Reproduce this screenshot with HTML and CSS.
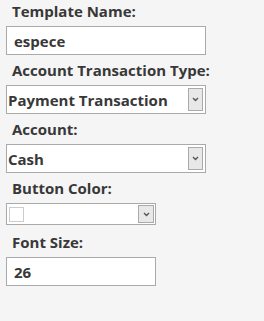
FILE: index.html
```html
<!DOCTYPE html>
<html lang="en">
<head>
    <meta charset="UTF-8">
    <meta name="viewport" content="width=device-width, initial-scale=1.0">
    <title>Template</title>
    <link rel="stylesheet" href="styles.css">
</head>
<body>

    <div class="form">
        <div class="field">
            <label>Template Name:</label>
            <div class="input wide">espece</div>
        </div>
        <div class="field">
            <label>Account Transaction Type:</label>
            <div class="select wide">
                <span class="value">Payment Transaction</span>
                <span class="arrow"><svg width="7" height="5" viewBox="0 0 7 5"><path d="M1 1 L3.5 3.5 L6 1" fill="none" stroke="#555" stroke-width="1.4"/></svg></span>
            </div>
        </div>
        <div class="field">
            <label>Account:</label>
            <div class="select wide">
                <span class="value">Cash</span>
                <span class="arrow"><svg width="7" height="5" viewBox="0 0 7 5"><path d="M1 1 L3.5 3.5 L6 1" fill="none" stroke="#555" stroke-width="1.4"/></svg></span>
            </div>
        </div>
        <div class="field color-field">
            <label>Button Color:</label>
            <div class="select narrow short">
                <span class="swatch"></span>
                <span class="arrow"><svg width="7" height="5" viewBox="0 0 7 5"><path d="M1 1 L3.5 3.5 L6 1" fill="none" stroke="#555" stroke-width="1.4"/></svg></span>
            </div>
        </div>
        <div class="field">
            <label>Font Size:</label>
            <div class="input narrow">26</div>
        </div>
    </div>

</body>
</html>
```

FILE: styles.css
```css
body {
    margin: 0;
    background-color: #f5f5f5;
    color: #383838;
    font-family: "Open Sans", Arial, sans-serif;
    font-weight: bold;
}
.form {
    padding: 1px 6px;
}
.field {
    margin-bottom: 5px;
}
.color-field {
    margin-bottom: 7px;
}
.field label {
    display: block;
    font-size: 15px;
    line-height: 20px;
    padding-left: 6px;
    margin-bottom: 5px;
}
.input, .select {
    box-sizing: border-box;
    background: #fff;
    border: 1px solid #aaa;
    font-size: 15px;
    height: 29px;
    display: flex;
    align-items: center;
}
.input {
    padding-left: 7px;
}
.select {
    padding: 0 2px 0 1px;
    justify-content: space-between;
}
.wide {
    width: 200px;
}
.narrow {
    width: 150px;
}
.short {
    height: 22px;
    padding: 0 1px 0 2px;
}
.arrow {
    box-sizing: border-box;
    width: 15px;
    height: 23px;
    background: #e8e8e8;
    border: 1px solid #aaa;
    display: flex;
    align-items: center;
    justify-content: center;
}
.short .arrow {
    height: 18px;
    width: 16px;
}
.swatch {
    width: 15px;
    height: 15px;
    box-sizing: border-box;
    border: 1px solid #ccc;
    background: #fff;
}
```
